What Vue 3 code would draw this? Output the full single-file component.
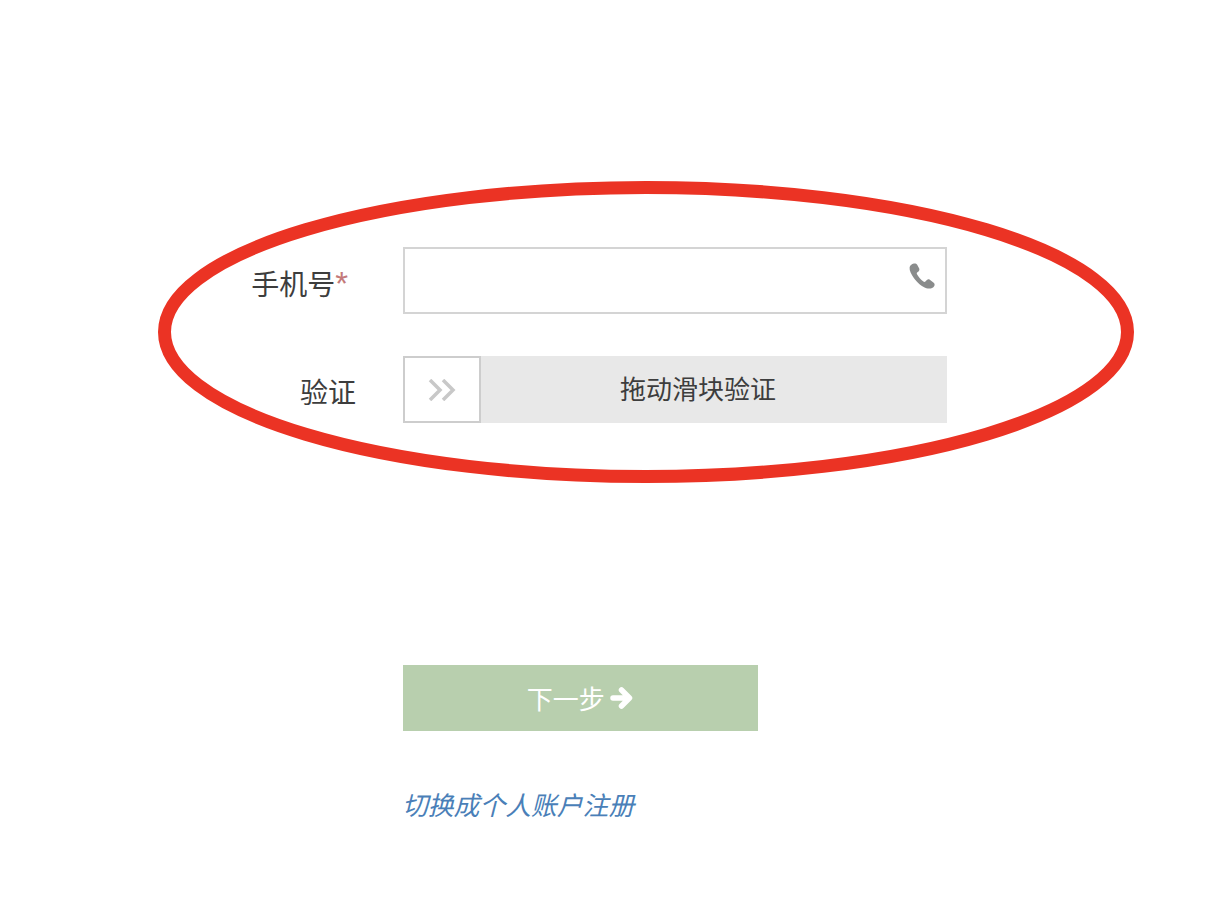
<script setup>
const fields = {
  phone: "手机号",
  verify: "验证",
  slider: "拖动滑块验证",
  next: "下一步",
  link: "切换成个人账户注册",
};
</script>

<template>
  <div class="page">
    <form class="form" @submit.prevent>
      <div class="row">
        <label class="label label-phone">{{ fields.phone }}<span class="star">*</span></label>
        <div class="input-box">
          <input class="input" type="text" />
          <svg class="phone-icon" viewBox="0 0 26 26">
            <path d="M4.800 .5 C2.800 1 .8 2.400 .6 4.500 C.3 7.600 2.200 11.400 5 15.200 C8 19.200 12.600 23.600 17.400 25.200 C20 26 23.800 25.800 25.300 23 C26 21.500 25.600 20.300 24.400 19.400 L20.800 16.800 C19.700 16.100 18.800 16.200 17.900 17.100 L16.400 18.600 C15.800 19.100 15.100 19.100 14.400 18.600 C11.800 16.700 9.600 14 8 11.200 C7.600 10.400 7.700 9.800 8.400 9.300 L9.500 8.400 C10.400 7.700 10.600 6.700 10.200 5.600 L8.200 1.700 C7.600 .6 6.100 .2 4.800 .5 Z" />
          </svg>
        </div>
      </div>
      <div class="row row-verify">
        <label class="label">{{ fields.verify }}</label>
        <div class="slider">
          <div class="handle">
            <svg class="chevrons" viewBox="0 0 28 22">
              <path d="M2 1 L12 11 L2 21 M15 1 L25 11 L15 21" />
            </svg>
          </div>
          <div class="slider-text">{{ fields.slider }}</div>
        </div>
      </div>
      <button class="next" type="submit">
        <span class="next-text">{{ fields.next }}</span>
        <svg class="arrow" viewBox="0 0 24 22">
          <path d="M3 11 H19 M11.500 3 L19.500 11 L11.500 19" />
        </svg>
      </button>
      <a class="link" href="#">{{ fields.link }}</a>
    </form>

    <!-- marca roja dibujada encima del formulario -->
    <svg class="ring" viewBox="0 0 976 302">
      <ellipse cx="488" cy="151" rx="481.500" ry="144.500" />
    </svg>
  </div>
</template>

<style>
html,
body {
  margin: 0;
  background: #fff;
}
</style>

<style scoped>
.page {
  position: relative;
  width: 1222px;
  height: 910px;
  overflow: hidden;
  font-family: "Liberation Sans", "Noto Sans CJK SC", sans-serif;
  color: #3d3d3d;
}

.form {
  display: flex;
  flex-direction: column;
  align-items: flex-start;
  padding: 247px 0 0 160px;
}

.row {
  display: flex;
  align-items: center;
  gap: 47px;
  height: 67px;
}

.row-verify {
  margin-top: 42px;
}

.label {
  width: 196px;
  padding-top: 8px;
  text-align: right;
  font-size: 28px;
  line-height: 32px;
}

.label-phone {
  padding-right: 8px;
  box-sizing: border-box;
}

.star {
  color: #c47a7a;
  font-size: 33px;
  line-height: 1;
}

.input-box {
  position: relative;
  width: 544px;
  height: 67px;
}

.input {
  width: 100%;
  height: 100%;
  box-sizing: border-box;
  border: 2px solid #d4d4d4;
  background: #fff;
  outline: none;
}

.phone-icon {
  position: absolute;
  top: 16px;
  right: 12px;
  width: 26px;
  height: 26px;
  fill: #8a8c8c;
}

.slider {
  display: flex;
  width: 544px;
  height: 67px;
  background: #e8e8e8;
}

.handle {
  display: flex;
  align-items: center;
  justify-content: center;
  width: 78px;
  box-sizing: border-box;
  border: 2px solid #cdcdcd;
  background: #fff;
}

.chevrons {
  width: 28px;
  height: 22px;
  fill: none;
  stroke: #c8c8c8;
  stroke-width: 3.500;
}

.slider-text {
  flex: 1;
  padding-right: 32px;
  text-align: center;
  font-size: 26px;
  line-height: 69px;
}

.next {
  display: flex;
  align-items: center;
  justify-content: center;
  gap: 5px;
  width: 354.500px;
  height: 66px;
  margin: 242px 0 0 243px;
  padding: 0;
  border: none;
  background: #b8cfae;
  color: #fff;
  font-family: inherit;
  font-size: 26px;
}

.next-text {
  margin-top: -2px;
}

.arrow {
  width: 24px;
  height: 22px;
  fill: none;
  stroke: #fff;
  stroke-width: 5.500;
  stroke-linecap: round;
  stroke-linejoin: round;
}

.link {
  margin: 54px 0 0 242px;
  font-size: 25.800px;
  font-style: italic;
  color: #4a7fb8;
  text-decoration: none;
}

.ring {
  position: absolute;
  left: 158px;
  top: 181px;
  width: 976px;
  height: 302px;
  fill: none;
  stroke: #eb3324;
  stroke-width: 13;
  pointer-events: none;
}
</style>
